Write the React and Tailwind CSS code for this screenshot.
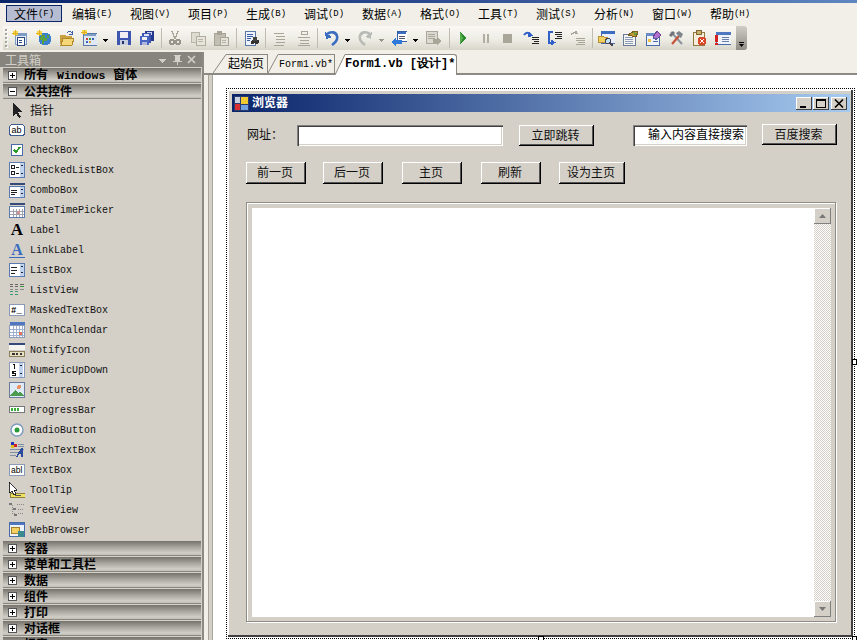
import React from "react";

const S = ({ children, w = 16, h = 16, className = "" }) => (
  <svg width={w} height={h} viewBox={`0 0 ${w} ${h}`} className={"shrink-0 " + className} shapeRendering="crispEdges">{children}</svg>
);

const tb = {
  grip: () => (
    <div className="flex h-[20px] w-[4px] flex-col justify-between py-[1px]">
      {[0, 1, 2, 3, 4].map((i) => <div key={i} className="h-[2px] w-[2px] bg-[#a8a69c] shadow-[1px_1px_0_#fff]" />)}
    </div>
  ),
  arrow: (c = "#000") => (
    <S w={5} h={16}><path d="M0 9h5v1H0zM1 10h3v1H1zM2 11h1v1H2z" fill={c} /></S>
  ),
  sep: () => <div className="h-[20px] w-[1px] bg-[#c0bdb0]" />,
  newproj: () => <S><rect x="3" y="3" width="12" height="12" fill="#7f9dc4" /><rect x="4" y="6" width="10" height="8" fill="#e8eef7" /><rect x="5" y="7" width="7" height="8" fill="#fff" stroke="#2c4a80" /><path d="M7 10h3M7 12h3" stroke="#2c4a80" /><path d="M1 1h5v4H1z" fill="#f5d94e" /><path d="M3 0h1v6H3zM0 3h6v1H0z" fill="#e0b020" /></S>,
  web: () => <S><circle cx="9" cy="9" r="6.5" fill="#3a7fd0" /><path d="M5 5h4v3h2v3H8v3H6v-4H4z" fill="#58a040" /><path d="M11 5h2v3h-2z" fill="#58a040" /><path d="M1 1h5v4H1z" fill="#f5d94e" /><path d="M3 0h1v6H3zM0 3h6v1H0z" fill="#e0b020" /></S>,
  open: () => <S><path d="M1 5h5l1 1h6v2H5l-2 6H1z" fill="#caa040" /><path d="M4 8h11l-2 7H2z" fill="#f5d778" stroke="#b08a2a" /><path d="M8 3c2-2 4-2 5 0M13 1v3h-3" stroke="#3a5fa8" fill="none" /></S>,
  newfile: () => <S><rect x="2" y="3" width="14" height="12" fill="#dfe8f5" stroke="#5a78a8" /><rect x="3" y="4" width="12" height="2" fill="#7f9dc4" /><rect x="5" y="8" width="2" height="2" fill="#d04040" /><rect x="8" y="8" width="2" height="2" fill="#40a040" /><rect x="11" y="8" width="2" height="2" fill="#4060c0" /><rect x="5" y="11" width="2" height="2" fill="#4060c0" /><rect x="8" y="11" width="2" height="2" fill="#d0a030" /><path d="M1 0h5v4H1z" fill="#f5d94e" /><path d="M3 0h1v5H3zM0 2h6v1H0z" fill="#e0b020" /></S>,
  save: () => <S><rect x="1" y="1" width="14" height="14" fill="#3d56b0" /><rect x="4" y="2" width="8" height="6" fill="#f0f0f5" /><rect x="4" y="10" width="8" height="5" fill="#c8cde0" /><rect x="6" y="11" width="2" height="3" fill="#20306a" /></S>,
  saveall: () => <S><rect x="6" y="1" width="9" height="10" fill="#24388c" /><rect x="8" y="2" width="5" height="3" fill="#c8d0f0" /><rect x="3" y="3" width="9" height="10" fill="#3d56b0" /><rect x="5" y="4" width="5" height="3" fill="#dfe3f5" /><rect x="1" y="6" width="9" height="9" fill="#4a66c4" /><rect x="3" y="7" width="5" height="3" fill="#f0f0f5" /><rect x="3" y="12" width="5" height="3" fill="#b0b8d8" /></S>,
  cut: () => <S><path d="M5 1l3 8M11 1L8 9" stroke="#a8a698" strokeWidth="1.5" fill="none" /><circle cx="5" cy="12" r="2.3" fill="none" stroke="#98968a" strokeWidth="1.4" /><circle cx="11" cy="12" r="2.3" fill="none" stroke="#98968a" strokeWidth="1.4" /></S>,
  copy: () => <S><rect x="1" y="2" width="8" height="10" fill="#dedbd0" stroke="#b8b5a8" /><rect x="6" y="6" width="9" height="9" fill="#e8e6dc" stroke="#b0ad9f" /><path d="M8 9h5M8 11h5" stroke="#b8b5a8" /></S>,
  paste: () => <S><rect x="1" y="3" width="11" height="12" fill="#c2bfb2" stroke="#a5a296" /><rect x="4" y="1" width="5" height="4" fill="#a8a598" /><rect x="7" y="7" width="8" height="8" fill="#e4e2d8" stroke="#a8a598" /><path d="M9 10h4M9 12h4" stroke="#b8b5a8" /></S>,
  find: () => <S><rect x="1" y="1" width="10" height="14" fill="#eef2fa" stroke="#5a78a8" /><path d="M3 4h6M3 6h6M3 8h4M3 10h3" stroke="#3a5fa8" /><circle cx="9" cy="12" r="2" fill="#333" /><circle cx="13" cy="12" r="2" fill="#333" /><rect x="9" y="7" width="4" height="4" fill="#444" /></S>,
  comment: () => <S><path d="M2 3h10M4 6h9M4 9h9M4 12h9M2 15h10" stroke="#a8a698" /></S>,
  uncomment: () => <S><path d="M5 1h6v3H5zM2 7h12M4 10h9M4 13h9M2 15h12" stroke="#a8a698" fill="none" /></S>,
  undo: () => <S><path d="M3 4c4-3 9-2 10 2s-2 7-5 9" stroke="#3a6cc0" strokeWidth="2.6" fill="none" shapeRendering="auto" /><path d="M1 2l1 7 6-2z" fill="#3a6cc0" /></S>,
  redo: () => <S><path d="M13 4C9 1 4 2 3 6s2 7 5 9" stroke="#b8bbb5" strokeWidth="2.6" fill="none" shapeRendering="auto" /><path d="M15 2l-1 7-6-2z" fill="#b8bbb5" /></S>,
  nav: () => <S><rect x="6" y="1" width="10" height="10" fill="#fff" stroke="#3a5fa8" /><rect x="7" y="2" width="8" height="2" fill="#3a6cc0" /><path d="M8 6h6M8 8h6" stroke="#556" /><path d="M0 12l5-4v2h6v4H5v2z" fill="#2f7ad8" /></S>,
  gray: () => <S w={18}><rect x="1" y="1" width="11" height="12" fill="#dcdad0" stroke="#aaa89c" /><path d="M3 4h7M3 6h7M3 8h7" stroke="#aaa89c" /><path d="M17 11l-5-4v2H8v4h4v2z" fill="#a8a698" /></S>,
  play: () => <S><path d="M5 2l7 6-7 6z" fill="#2d8a2d" /><path d="M5 2l3 6-3 6z" fill="#55b050" /></S>,
  pause: () => <S><rect x="5" y="4" width="2" height="9" fill="#b0ae9f" /><rect x="9" y="4" width="2" height="9" fill="#b0ae9f" /></S>,
  stop: () => <S><rect x="3" y="4" width="9" height="9" fill="#a8a698" /></S>,
  stepin: () => <S><path d="M1 5c2-3 5-3 7 0" stroke="#3060c8" strokeWidth="2" fill="none" shapeRendering="auto" /><path d="M6 2l4 4-5 1z" fill="#3060c8" /><path d="M9 7h7M9 9h7M11 11h5M9 13h7" stroke="#222" /></S>,
  stepover: () => <S><path d="M6 2H2v11h3" stroke="#3060c8" strokeWidth="2" fill="none" /><path d="M4 15.5l5-3-5-3z" fill="#3060c8" /><path d="M8 2h7M8 4h7M10 6h5M8 8h7" stroke="#222" /></S>,
  stepout: () => <S><path d="M1 5c2-3 5-3 7-1M6 1v3" stroke="#a8a698" strokeWidth="1.4" fill="none" /><path d="M6 8h9M6 10h9M8 12h7M6 14h9" stroke="#a8a698" /></S>,
  findwin: () => <S w={17}><rect x="3" y="1" width="14" height="12" fill="#e8eefa" stroke="#4a6aa8" /><rect x="3" y="1" width="14" height="3" fill="#3a6cc0" /><path d="M0 6h5l1 1h3v5H0z" fill="#f0d060" stroke="#b89030" /><circle cx="10" cy="11" r="2.5" fill="#bfe0f5" stroke="#445" /><path d="M12 13l3 3" stroke="#445" strokeWidth="2" /></S>,
  props: () => <S><rect x="1" y="4" width="12" height="11" fill="#f4f4f0" stroke="#6a7a98" /><path d="M3 7h8M3 9h8M3 11h8M3 13h8" stroke="#8a9ab8" /><path d="M6 5l6-4 4 1-2 5-4-1z" fill="#c09a30" stroke="#7a6020" /><path d="M11 2l4 1-2 3z" fill="#6aa040" /></S>,
  toolboxi: () => <S w={17}><rect x="1" y="3" width="13" height="12" fill="#eef2fa" stroke="#4a6aa8" /><rect x="1" y="3" width="13" height="3" fill="#6a8cc8" /><path d="M3 9h3v3H3z" fill="#f0c040" /><path d="M12 1l4 4-5 5-3-3z" fill="#b070d0" stroke="#704090" /><path d="M8 8h5M8 11h5" stroke="#4a6aa8" /></S>,
  tools: () => <S><g shapeRendering="auto"><path d="M3 2l11 12" stroke="#8f959c" strokeWidth="2.2" /><path d="M1 5l4-4 2 2-4 4z" fill="#6f7378" /><path d="M4 14L11 6" stroke="#c8513a" strokeWidth="2.2" /><path d="M8 3l3-2 4 3-2 4-2-1z" fill="#7f858b" /></g></S>,
  errlist: () => <S><rect x="2" y="2" width="11" height="13" fill="#f5eedc" stroke="#907840" /><rect x="5" y="0" width="5" height="4" fill="#c8b070" stroke="#806830" /><circle cx="11" cy="11" r="4.5" fill="#d84828" /><path d="M9 9l4 4M13 9l-4 4" stroke="#fff" strokeWidth="1.4" /></S>,
  task: () => <S w={17}><rect x="2" y="2" width="15" height="12" fill="#eef2fa" stroke="#4a6aa8" /><rect x="2" y="2" width="15" height="3" fill="#5078c0" /><path d="M8 7h7M8 9h7M8 11h7" stroke="#6a80a8" /><rect x="1" y="5" width="3" height="7" fill="#d82020" /><rect x="1" y="13" width="3" height="2" fill="#d82020" /></S>,
  chev: () => (
    <div className="flex h-[24px] w-[11px] flex-col items-center justify-end rounded-r-[3px] bg-[linear-gradient(180deg,#cfcdc4,#8f8d85)] pb-[3px]">
      <div className="mb-[1px] h-[1px] w-[5px] bg-black" />
      <svg width="5" height="3" viewBox="0 0 5 3"><path d="M0 0h5L2.5 3z" fill="#000" /></svg>
    </div>
  ),
};

const toolbarItems = [
  ["ml-[2px]", tb.grip()], ["ml-[3px]", tb.newproj()], ["ml-[8px]", tb.web()], ["ml-[7px]", tb.open()], ["ml-[6px]", tb.newfile()],
  ["ml-[6px]", tb.arrow()], ["ml-[8px]", tb.save()], ["ml-[7px]", tb.saveall()], ["ml-[6px]", tb.sep()], ["ml-[5px]", tb.cut()],
  ["ml-[7px]", tb.copy()], ["ml-[7px]", tb.paste()], ["ml-[7px]", tb.sep()], ["ml-[7px]", tb.find()], ["ml-[5px]", tb.sep()],
  ["ml-[6px]", tb.comment()], ["ml-[8px]", tb.uncomment()], ["ml-[5px]", tb.sep()], ["ml-[6px]", tb.undo()], ["ml-[5px]", tb.arrow()],
  ["ml-[7px]", tb.redo()], ["ml-[6px]", tb.arrow("#9a988c")], ["ml-[7px]", tb.nav()], ["ml-[6px]", tb.arrow()], ["ml-[7px]", tb.gray()],
  ["ml-[6px]", tb.sep()], ["ml-[5px]", tb.play()], ["ml-[7px]", tb.pause()], ["ml-[6px]", tb.stop()], ["ml-[7px]", tb.stepin()],
  ["ml-[8px]", tb.stepover()], ["ml-[7px]", tb.stepout()], ["ml-[6px]", tb.sep()], ["ml-[5px]", tb.findwin()], ["ml-[7px]", tb.props()],
  ["ml-[7px]", tb.toolboxi()], ["ml-[6px]", tb.tools()], ["ml-[7px]", tb.errlist()], ["ml-[7px]", tb.task()], ["ml-[5px]", tb.chev()],
];

const menus = [["文件", "F"], ["编辑", "E"], ["视图", "V"], ["项目", "P"], ["生成", "B"], ["调试", "D"], ["数据", "A"], ["格式", "O"], ["工具", "T"], ["测试", "S"], ["分析", "N"], ["窗口", "W"], ["帮助", "H"]];

const PlusBox = ({ minus }) => (
  <div className="relative h-[9px] w-[9px] shrink-0 border border-[#555] bg-white">
    <div className="absolute left-[1px] top-[3px] h-[1px] w-[5px] bg-black" />
    {!minus && <div className="absolute left-[3px] top-[1px] h-[5px] w-[1px] bg-black" />}
  </div>
);

const Category = ({ name, minus }) => (
  <div className="ml-[3px] mt-[1px] flex h-[15px] w-[198px] shrink-0 items-center bg-[linear-gradient(180deg,#75736b,#a5a39b_40%,#d0cec6_80%,#b5b3aa)] pl-[5px] shadow-[inset_0_-1px_0_#8a887f]">
    <PlusBox minus={minus} />
    <span className="-mt-[2px] ml-[7px] whitespace-nowrap text-[12px] font-bold leading-[15px] text-black">{name}</span>
  </div>
);

const Spin = ({ x = 11, y = 1, h = 14 }) => (
  <>
    <rect x={x} y={y} width="4" height={h} fill="#c0d4f0" />
    <path d={`M${x + 1} ${y + 3}l1-1 1 1M${x + 1} ${y + h - 4}l1 1 1-1`} stroke="#223" fill="none" shapeRendering="auto" />
  </>
);

const tbx = {
  pointer: <S><path d="M4 0v14l3-3 3 5 2-1-3-5h4z" fill="#222" /></S>,
  button: <S><rect x=".5" y="2.5" width="15" height="11" rx="3" fill="#fff" stroke="#3a5a90" /><text x="2.5" y="11" fontSize="9" fontFamily="Liberation Sans">ab</text></S>,
  check: <S><rect x="2.5" y="2.5" width="11" height="11" fill="#fff" stroke="#4a6aa8" /><path d="M5 8l2 2 4-5" stroke="#2a9a2a" strokeWidth="2" fill="none" /></S>,
  checked: <S><rect x=".5" y=".5" width="15" height="15" fill="#fff" stroke="#5a7ab0" /><Spin /><path d="M2.5 3.5h3v3h-3zM2.5 9.5h3v3h-3z" fill="none" stroke="#222" /><path d="M7 5h3M7 11h3" stroke="#222" /></S>,
  combo: <S><rect x=".5" y="1" width="15" height="2" fill="#334a7a" /><rect x=".5" y="4.5" width="15" height="11" fill="#fff" stroke="#5a7ab0" /><Spin y={5} h={10} /><path d="M2 8h6M2 10h6M2 12h4" stroke="#222" /></S>,
  date: <S><rect x=".5" y="1" width="15" height="2" fill="#334a7a" /><rect x=".5" y="4" width="15" height="11" fill="#fff" stroke="#5a7ab0" /><path d="M4 7v8M7 7v8M10 7v8M13 7v8M1 9h14M1 12h14" stroke="#a0a0b0" /><rect x="8" y="9" width="3" height="3" fill="#d09090" /></S>,
  label: <span className="w-[16px] text-center font-['Liberation_Serif'] text-[17px] font-bold leading-[16px] text-black">A</span>,
  link: <span className="w-[16px] border-b border-[#3a6cc0] text-center font-['Liberation_Serif'] text-[16px] font-bold leading-[14px] text-[#3a6cc0]">A</span>,
  list: <S><rect x=".5" y="1.5" width="15" height="13" fill="#fff" stroke="#5a7ab0" /><Spin y={2} h={12} /><path d="M2 5h6M2 8h6M2 11h4" stroke="#222" /></S>,
  view: <S><path d="M1 2h3M6 2h3M11 2h4M1 4h3M6 4h3" stroke="#666" /><path d="M11 4h4" stroke="#3a9a3a" /><path d="M1 9h3M6 9h3M1 12h3M6 12h3" stroke="#3a9a7a" /><path d="M1 7h3M6 7h3M11 7h4" stroke="#888" /></S>,
  masked: <S><rect x=".5" y="2.5" width="15" height="11" fill="#fff" stroke="#8a9ab8" /><text x="2" y="11" fontSize="9" fontWeight="bold" fontFamily="Liberation Mono">#_</text></S>,
  month: <S><rect x=".5" y="0" width="15" height="3" fill="#5078c0" /><rect x=".5" y="3.5" width="15" height="12" fill="#fff" stroke="#8a9ab8" /><path d="M4 4v11M7 4v11M10 4v11M13 4v11M1 7h14M1 10h14M1 13h14" stroke="#a0b0d0" /><rect x="10" y="10" width="3" height="3" fill="#e07050" /></S>,
  notify: <S><rect x="0" y="1" width="16" height="2" fill="#334a7a" /><rect x="0" y="3" width="16" height="5" fill="#f4f4f0" /><rect x=".5" y="9.5" width="15" height="5" fill="#e8e0c0" stroke="#8a8060" /><path d="M3 11h3v2H3zM7 11h2v2H7zM11 11h2v2h-2z" fill="#333" /></S>,
  numeric: <S><rect x=".5" y=".5" width="15" height="15" fill="#fff" stroke="#8a9ab8" /><Spin x={10} /><path d="M4 2h2v5H5V3H4zM3 9h4v1H5v1h2v3H3v-1h3v-1H3z" fill="#111" /></S>,
  picture: <S><rect x=".5" y=".5" width="15" height="15" fill="#dfeaf8" stroke="#6a7a98" /><path d="M1 14l5-6 3 3 2-2 4 5z" fill="#4a9a50" /><circle cx="10" cy="5" r="2" fill="#e89060" /></S>,
  progress: <S><rect x=".5" y="4.5" width="15" height="6" rx="1" fill="#fff" stroke="#777" /><path d="M2 6h2v3H2zM5 6h2v3H5zM8 6h2v3H8z" fill="#38b038" /></S>,
  radio: <S><circle cx="8" cy="8" r="6" fill="#fff" stroke="#7a9ac0" strokeWidth="1.4" shapeRendering="auto" /><circle cx="8" cy="8" r="2.5" fill="#2a9a3a" shapeRendering="auto" /></S>,
  rich: <S><rect x="2" y="0" width="3" height="3" fill="#2030c0" /><rect x="5" y="2" width="3" height="3" fill="#d02020" /><rect x="2" y="3" width="3" height="3" fill="#e0c020" /><path d="M9 2h6M9 4h6M1 7h14M1 10h8M1 13h6" stroke="#8090a8" /><path d="M7 15l5-9h2v9h-2v-3H10l-1 3z" fill="#2a4aa0" /></S>,
  textbox: <S><rect x=".5" y="2.5" width="15" height="11" fill="#fff" stroke="#8a9ab8" /><text x="2" y="11" fontSize="8.5" fontFamily="Liberation Sans">abl</text></S>,
  tooltip: <S><rect x="1" y="11" width="15" height="4" fill="#f0e060" stroke="#8a8040" /><path d="M6 13h6" stroke="#555" /><path d="M0 0v11l3-2 2 4 2-1-2-4h3z" fill="#fff" stroke="#000" strokeWidth=".8" /></S>,
  tree: <S><path d="M3 3v10M3 7h3M3 11h4M8 2h7M9 7h6M9 11h6" stroke="#888" strokeDasharray="1 1" /><rect x="0" y="1" width="3" height="2" fill="#777" /><rect x="4" y="6" width="3" height="2" fill="#777" /><rect x="5" y="12" width="3" height="2" fill="#777" /></S>,
  web: <S><rect x=".5" y=".5" width="15" height="14" fill="#eef2fa" stroke="#4a6aa8" /><rect x="1" y="1" width="14" height="2" fill="#5078c0" /><rect x="2" y="5" width="8" height="6" fill="#f5cf60" stroke="#a08030" /><circle cx="12" cy="12" r="3.5" fill="#3a8a90" /></S>,
};

const items = [["指针", "pointer"], ["Button", "button"], ["CheckBox", "check"], ["CheckedListBox", "checked"], ["ComboBox", "combo"], ["DateTimePicker", "date"], ["Label", "label"], ["LinkLabel", "link"], ["ListBox", "list"], ["ListView", "view"], ["MaskedTextBox", "masked"], ["MonthCalendar", "month"], ["NotifyIcon", "notify"], ["NumericUpDown", "numeric"], ["PictureBox", "picture"], ["ProgressBar", "progress"], ["RadioButton", "radio"], ["RichTextBox", "rich"], ["TextBox", "textbox"], ["ToolTip", "tooltip"], ["TreeView", "tree"], ["WebBrowser", "web"]];

const raised = "bg-[#d4d0c8] shadow-[inset_-1px_-1px_0_#000,inset_1px_1px_0_#fff,inset_-2px_-2px_0_#555]";
const sunken = "bg-white shadow-[inset_1px_1px_0_#808080,inset_2px_2px_0_#404040,inset_-1px_-1px_0_#fff,inset_-2px_-2px_0_#d4d0c8]";

const Btn = ({ children, className }) => (
  <div className={"flex items-center justify-center pb-[2px] pr-[2px] text-[12px] text-[#111] " + raised + " " + className}>{children}</div>
);

const WinBtn = ({ children, className = "" }) => (
  <div className={"flex h-[13px] w-[16px] items-center justify-center bg-[#d4d0c8] shadow-[inset_-1px_-1px_0_#404040,inset_1px_1px_0_#fff] " + className}>{children}</div>
);

const Tab = ({ children, className }) => (
  <div className={"flex h-[19px] shrink-0 items-center whitespace-nowrap border-r border-t border-[#8a887f] text-black " + className}>{children}</div>
);

export default function App() {
  return (
    <div className="relative flex h-[640px] w-[857px] flex-col overflow-hidden bg-[#f1efe7] font-['Noto_Sans_CJK_SC',sans-serif]">
      <div className="h-[3px] shrink-0 bg-[linear-gradient(90deg,#0a246a,#2a4a90_50%,#5f86c0)]" />
      <div className="flex h-[23px] shrink-0 items-center pb-[2px] pl-[6px]">
        {menus.map(([n, k], i) => (
          <div key={n} className={i === 0
            ? "flex h-[17px] w-[56px] items-center justify-center border border-[#0a246a] bg-[#b6bdd2] text-black"
            : "ml-[2px] flex h-[17px] w-[56px] items-center justify-center text-black"}>
            <span className="text-[12px] leading-[14px]">{n}</span>
            <span className="font-['Liberation_Mono'] text-[9px] leading-[14px]">({k})</span>
          </div>
        ))}
      </div>
      <div className="ml-[3px] flex h-[24px] w-[744px] shrink-0 items-center rounded-r-[3px] bg-[linear-gradient(180deg,#f9f8f4,#ecebe3_60%,#d8d6ca)]">
        {toolbarItems.map(([m, el], i) => <div key={i} className={"flex shrink-0 items-center " + m}>{el}</div>)}
      </div>
      <div className="mt-[2px] flex min-h-0 flex-1">
        <div className="flex w-[204px] shrink-0 flex-col overflow-hidden border-r-2 border-[#8c8a82] bg-[#d4d0c8]">
          <div className="flex h-[15px] shrink-0 items-center bg-[#86847c] pl-[5px] pr-[4px] text-[12px] leading-[15px] text-[#d4d0c8]">
            <span className="-mt-[1px]">工具箱</span>
            <svg className="ml-auto" width="40" height="12" viewBox="0 0 40 12" shapeRendering="crispEdges">
              <path d="M1 5h7v1H1zM2 6h5v1H2zM3 7h3v1H3zM4 8h1v1H4z" fill="#d4d0c8" />
              <path d="M16 1h7v1h-1v5h2v1h-4v3h-1V8h-4V7h2V2h-1z" fill="#d4d0c8" />
              <path d="M30 2l7 7M37 2l-7 7" stroke="#d4d0c8" strokeWidth="1.6" shapeRendering="auto" />
            </svg>
          </div>
          <Category name={<>所有<span className="ml-[9px] mr-[8px] font-['Liberation_Mono'] text-[11.5px]">Windows</span>窗体</>} />
          <Category name="公共控件" minus />
          <div className="h-[1px] shrink-0" />
          {items.map(([n, ic]) => (
            <div key={n} className="ml-[9px] flex h-[20px] shrink-0 items-center">
              <div className="flex w-[16px] justify-center">{tbx[ic]}</div>
              <span className={"ml-[5px] whitespace-nowrap leading-[19px] text-[#111] " + (n === "指针" ? "-mt-[2px] text-[12px]" : "mt-[1px] font-['Liberation_Mono'] text-[10px]")}>{n}</span>
            </div>
          ))}
          {["容器", "菜单和工具栏", "数据", "组件", "打印", "对话框", "报表"].map((c) => <Category key={c} name={c} />)}
        </div>
        <div className="flex min-w-0 flex-1 flex-col">
          <div className="flex h-[23px] shrink-0 items-end border-b-2 border-[#8c8a82] pl-[9px]">
            <svg width="13" height="19" viewBox="0 0 13 19" className="shrink-0"><path d="M0 19L13 .5" stroke="#8a887f" fill="none" /></svg>
            <Tab className="w-[42px] justify-end pb-[3px] pr-[3px] text-[12px]">起始页</Tab>
            <svg width="10" height="19" viewBox="0 0 10 19" className="shrink-0"><path d="M0 19L10 .5" stroke="#8a887f" fill="none" /></svg>
            <Tab className="w-[57px] justify-center font-['Liberation_Mono'] text-[10px]">Form1.vb*</Tab>
            <div className="-mb-[2px] flex shrink-0 items-end">
              <svg width="10" height="21" viewBox="0 0 10 21" className="shrink-0"><path d="M0 21L10 .5V21z" fill="#fff" /><path d="M0 21L10 .5" stroke="#8a887f" fill="none" /></svg>
              <Tab className="h-[21px] w-[112px] justify-start rounded-tr-[3px] bg-white pb-[3px] font-['Liberation_Mono'] text-[12px] font-bold">Form1.vb [设计]*</Tab>
            </div>
          </div>
          <div className="flex min-h-0 flex-1">
            <div className="ml-[4px] w-[5px] shrink-0 border-x border-[#a8a69c] bg-[#d4d0c8]" />
            <div className="min-w-0 flex-1 overflow-hidden bg-white pl-[13px] pt-[13px]">
              <div className="relative h-[551px] w-[629px] border border-dotted border-black p-[1px]">
                <div className="flex h-[547px] w-[625px] flex-col bg-[#d4d0c8] pl-[4px] pr-[2px] pt-[4px] shadow-[inset_-2px_-2px_0_#404040,inset_1px_1px_0_#fff]">
                  <div className="flex h-[18px] w-[618px] shrink-0 items-center bg-[linear-gradient(90deg,#0a246a,#a6caf0)] pl-[2px] pr-[3px]">
                    <svg width="15" height="15" viewBox="0 0 15 15" shapeRendering="crispEdges" className="shrink-0">
                      <rect width="15" height="15" fill="#2a3a70" />
                      <rect x="7" y="1" width="7" height="7" fill="#f0c830" />
                      <rect x="1" y="1" width="5" height="6" fill="#c8d0e0" />
                      <rect x="1" y="8" width="5" height="6" fill="#d83030" />
                      <rect x="7" y="9" width="7" height="5" fill="#70a0e0" />
                    </svg>
                    <span className="-mt-[2px] ml-[3px] text-[12px] font-bold leading-[16px] text-white">浏览器</span>
                    <WinBtn className="ml-auto"><svg width="10" height="9" viewBox="0 0 10 9" shapeRendering="crispEdges"><rect x="1" y="7" width="6" height="2" fill="#000" /></svg></WinBtn>
                    <WinBtn className="ml-[1px]"><svg width="10" height="9" viewBox="0 0 10 9" shapeRendering="crispEdges"><path d="M0 0h10v2H0zM0 2h1v7H0zM9 2h1v7H9zM0 8h10v1H0z" fill="#000" /></svg></WinBtn>
                    <WinBtn className="ml-[2px]"><svg width="10" height="9" viewBox="0 0 10 9"><path d="M1 .5l8 8M9 .5l-8 8" stroke="#000" strokeWidth="1.6" /></svg></WinBtn>
                  </div>
                  <div className="mt-[13px] flex h-[21px] shrink-0 items-center pl-[15px]">
                    <span className="-mt-[3px] w-[50px] text-[12px] leading-[18px] text-[#111]">网址：</span>
                    <div className={"h-[21px] w-[206px] " + sunken} />
                    <Btn className="ml-[16px] h-[21px] w-[75px]">立即跳转</Btn>
                    <div className={"ml-[39px] flex h-[21px] w-[114px] items-center justify-end pb-[4px] pr-[3px] text-[12px] text-black " + sunken}>输入内容直接搜索</div>
                    <Btn className="-mt-[2px] ml-[15px] h-[21px] w-[75px]">百度搜索</Btn>
                  </div>
                  <div className="mt-[16px] flex h-[22px] shrink-0 pl-[14px]">
                    <Btn className="h-[22px] w-[60px]">前一页</Btn>
                    <Btn className="ml-[17px] h-[22px] w-[60px]">后一页</Btn>
                    <Btn className="ml-[19px] h-[22px] w-[60px]">主页</Btn>
                    <Btn className="ml-[19px] h-[22px] w-[60px]">刷新</Btn>
                    <Btn className="ml-[18px] h-[22px] w-[66px]">设为主页</Btn>
                  </div>
                  <div className="ml-[14px] mt-[18px] flex h-[420px] w-[590px] shrink-0 border border-[#8e8c84] p-[1px] shadow-[inset_1px_1px_0_#fff,1px_1px_0_#fff]">
                    <div className="mb-[3px] ml-[4px] mr-[3px] mt-[4px] flex min-w-0 flex-1 bg-white">
                      <div className="flex-1" />
                      <div className="flex w-[17px] flex-col bg-[repeating-conic-gradient(#fff_0_25%,#d4d0c8_0_50%)] bg-[length:2px_2px]">
                        <div className="flex h-[16px] items-center justify-center bg-[#d4d0c8] shadow-[inset_-1px_-1px_0_#808080,inset_1px_1px_0_#fff]"><svg width="7" height="4" viewBox="0 0 7 4"><path d="M3.5 0L7 4H0z" fill="#777" /></svg></div>
                        <div className="flex-1" />
                        <div className="flex h-[16px] items-center justify-center bg-[#d4d0c8] shadow-[inset_-1px_-1px_0_#808080,inset_1px_1px_0_#fff]"><svg width="7" height="4" viewBox="0 0 7 4"><path d="M0 0h7L3.5 4z" fill="#777" /></svg></div>
                      </div>
                    </div>
                  </div>
                </div>
                <div className="absolute -right-[3px] top-[270px] h-[6px] w-[5px] border border-black bg-white" />
                <div className="absolute -bottom-[3px] left-[311px] h-[5px] w-[6px] border border-black bg-white" />
                <div className="absolute -bottom-[3px] -right-[3px] h-[5px] w-[5px] border border-black bg-white" />
              </div>
            </div>
          </div>
        </div>
      </div>
    </div>
  );
}
